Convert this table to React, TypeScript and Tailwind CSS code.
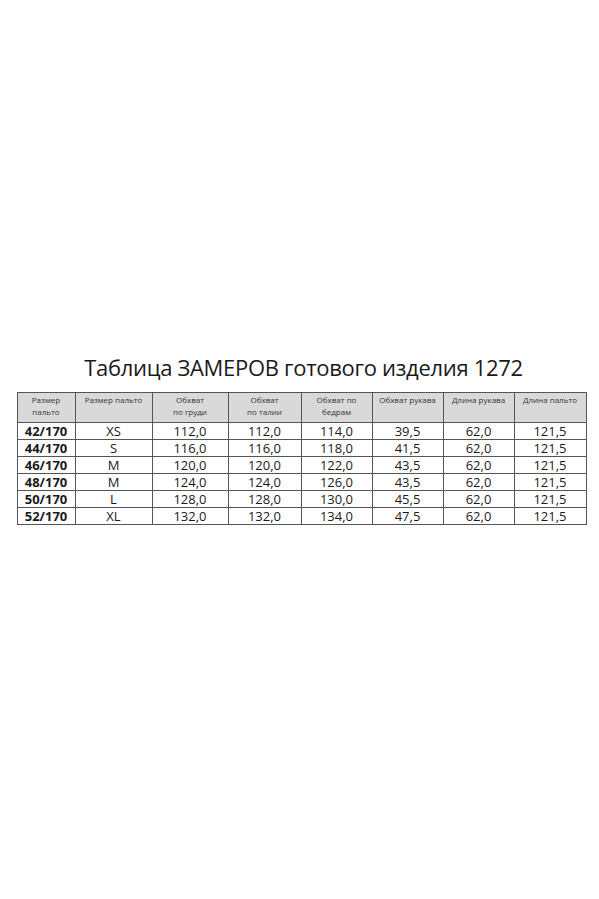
import React from "react";

const rows = [
  ["42/170", "XS", "112,0", "112,0", "114,0", "39,5", "62,0", "121,5"],
  ["44/170", "S", "116,0", "116,0", "118,0", "41,5", "62,0", "121,5"],
  ["46/170", "M", "120,0", "120,0", "122,0", "43,5", "62,0", "121,5"],
  ["48/170", "M", "124,0", "124,0", "126,0", "43,5", "62,0", "121,5"],
  ["50/170", "L", "128,0", "128,0", "130,0", "45,5", "62,0", "121,5"],
  ["52/170", "XL", "132,0", "132,0", "134,0", "47,5", "62,0", "121,5"],
];

const headers: string[][] = [
  ["Размер", "пальто"],
  ["Размер пальто"],
  ["Обхват", "по груди"],
  ["Обхват", "по талии"],
  ["Обхват по", "бедрам"],
  ["Обхват рукава"],
  ["Длина рукава"],
  ["Длина пальто"],
];

export default function App() {
  return (
    <div className="w-[599px] h-[899px] bg-white font-['Open_Sans',sans-serif] text-[#1a1a1a]">
      <div className="pt-[353px] flex flex-col items-center">
        <h1 className="text-[22px] leading-[29px] tracking-[-0.3px] ml-[8px]">
          Таблица ЗАМЕРОВ готового изделия 1272
        </h1>
        <div className="mt-[10px] ml-[4px] grid grid-cols-[58px_77px_76px_73px_71px_71px_71px_72px] border-l border-t border-[#555]">
          {headers.map((h, i) => (
            <div
              key={i}
              className="h-[30px] bg-[#d9d9d9] border-r border-b border-[#555] flex flex-col items-center pt-[1px] text-[8px] leading-[12px] text-[#333]"
            >
              {h.map((l, j) => (
                <span key={j}>{l}</span>
              ))}
            </div>
          ))}
          {rows.map((r, ri) =>
            r.map((c, ci) => (
              <div
                key={ri + "-" + ci}
                className={
                  "h-[17px] border-r border-b border-[#555] flex items-center justify-center text-[13px] leading-[17px] " +
                  (ci === 0 ? "font-bold" : "")
                }
              >
                {c}
              </div>
            ))
          )}
        </div>
      </div>
    </div>
  );
}
